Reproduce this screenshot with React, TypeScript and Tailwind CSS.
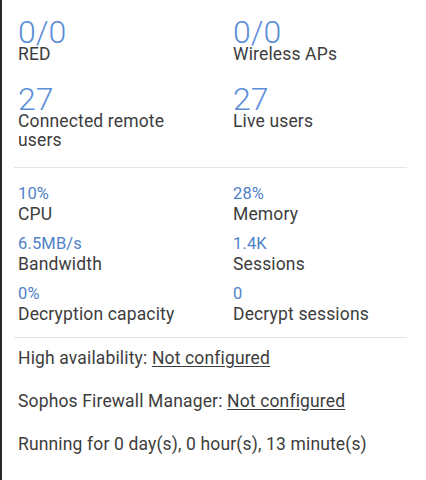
import React from 'react';

const big = [
  { value: '0/0', label: 'RED' },
  { value: '0/0', label: 'Wireless APs' },
  { value: '27', label: 'Connected remote users' },
  { value: '27', label: 'Live users' },
];

const small = [
  { value: '10%', label: 'CPU' },
  { value: '28%', label: 'Memory' },
  { value: '6.5MB/s', label: 'Bandwidth' },
  { value: '1.4K', label: 'Sessions' },
  { value: '0%', label: 'Decryption capacity' },
  { value: '0', label: 'Decrypt sessions' },
];

export default function App() {
  return (
    <div
      className="w-[426px] h-[480px] bg-white border-l-2 border-[#2a2a2a] text-[#3d3d3d] overflow-hidden tracking-[0.15px]"
      style={{ fontFamily: 'Roboto, "Liberation Sans", sans-serif' }}
    >
      <div className="pl-3 pr-[19px] pt-[19px]">
        {/* Top counters */}
        <div className="grid grid-cols-[215px_1fr] gap-y-[22px] pl-1">
          {big.map((b, i) => (
            <div key={i}>
              <div className="text-[32px] leading-[26px] font-light tracking-normal text-[#5b8fd8]">{b.value}</div>
              <div className="text-[17.5px] leading-[19px] pr-10">{b.label}</div>
            </div>
          ))}
        </div>

        <div className="h-px bg-[#e4e4e4] mt-[17px]" />

        {/* Resource stats */}
        <div className="grid grid-cols-[215px_1fr] gap-y-[10px] pl-1 pt-4">
          {small.map((s, i) => (
            <div key={i}>
              <div className="text-[16.5px] leading-[20px] text-[#4f82c8]">{s.value}</div>
              <div className="text-[17.5px] leading-[20px]">{s.label}</div>
            </div>
          ))}
        </div>

        <div className="h-px bg-[#e4e4e4] mt-[13px]" />

        <div className="pl-1 pt-[10px] text-[17.5px] leading-[20px] flex flex-col gap-[23px]">
          <div>
            High availability: <span className="underline underline-offset-2">Not configured</span>
          </div>
          <div>
            Sophos Firewall Manager: <span className="underline underline-offset-2">Not configured</span>
          </div>
          <div>Running for 0 day(s), 0 hour(s), 13 minute(s)</div>
        </div>
      </div>
    </div>
  );
}
